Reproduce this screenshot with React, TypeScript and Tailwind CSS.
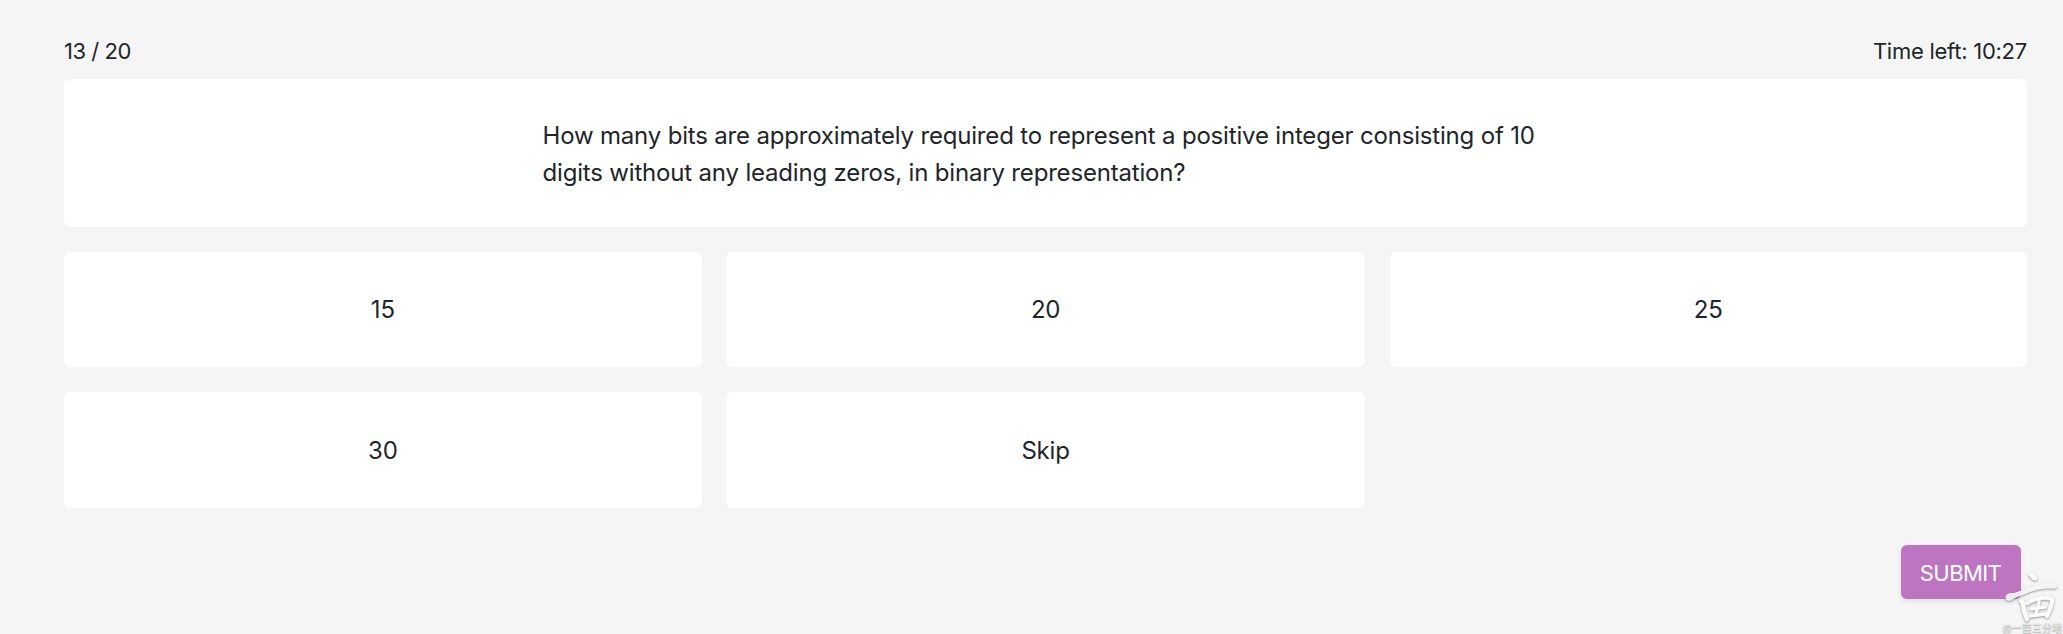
const answers = ["15", "20", "25", "30", "Skip"];

function Watermark() {
  return (
    <div className="pointer-events-none absolute right-0 bottom-0 h-[64px] w-[64px]">
      <svg
        viewBox="0 0 64 64"
        className="h-full w-full overflow-visible drop-shadow-[0_1px_1px_rgba(0,0,0,0.4)]"
        fill="none"
        stroke="#fbfbfb"
        strokeLinecap="round"
        strokeLinejoin="round"
      >
        <path fill="#fbfbfb" strokeWidth="1.5" d="M29 4C32 2 37 5 38 8C37 11 34 10 32 7Z" />
        <path
          fill="#fbfbfb"
          fillOpacity="0.9"
          strokeWidth="0.8"
          d="M7 28C6 25 9 23 15 23.5C24 21 31 17 40 16C45 13 51 12 57 15C59 17 57 19 50 18C40 18 32 21 25 24C19 26 15 28 12 30C9 31 7 30 7 28Z"
        />
        <path strokeWidth="4.6" d="M22 31C25 32 24 36 25 40L28 49" />
        <path strokeWidth="4.2" d="M28 33C36 29 46 26 53 29C54 33 51 39 48 46" />
        <path strokeWidth="3.4" d="M40 30C40 35 38 39 37 44M32 39L46 37M31 46L46 44" />
      </svg>
      <span className="absolute right-[1px] bottom-0 font-['Noto_Sans_CJK_SC',sans-serif] text-[10px] leading-[12px] whitespace-nowrap text-[#f0f0f0] [text-shadow:0_0_1px_#999,0_1px_1px_#aaa]">
        @一亩三分地
      </span>
    </div>
  );
}

export default function App() {
  return (
    <main className="relative h-[634px] overflow-hidden bg-[#f5f5f5] pt-[34px] pr-9 pl-16 font-['Inter',sans-serif] text-[#212529]">
      <header className="flex h-[45px] justify-between text-[22px] leading-[35px]">
        <span className="tracking-[-0.45px]">13 / 20</span>
        <span className="tracking-[-0.25px]">Time left: 10:27</span>
      </header>
      <section className="flex h-[148px] items-center justify-center rounded-md bg-white pt-[2px]">
        <p className="w-[1006px] text-[24px] leading-[37px] tracking-[-0.18px]">
          How many bits are approximately required to represent a positive integer consisting of 10
          <br />
          digits without any leading zeros, in binary representation?
        </p>
      </section>
      <section className="mt-[25px] grid grid-cols-[637.6fr_639fr_637.4fr] grid-rows-[115px_116px] gap-x-[24.5px] gap-y-[25px]">
        {answers.map((answer) => (
          <button key={answer} className="rounded-md bg-white text-[24px] leading-[37px] tracking-[-0.18px]">
            {answer}
          </button>
        ))}
      </section>
      <div className="mt-[37px] flex justify-end pr-[6px]">
        <button className="h-[54px] w-[120px] rounded-md bg-[#be75c1] pt-[2px] pr-[1px] text-[22px] tracking-[-0.6px] text-white shadow-[0_2px_5px_rgba(0,0,0,0.1)]">
          SUBMIT
        </button>
      </div>
      <Watermark />
    </main>
  );
}
